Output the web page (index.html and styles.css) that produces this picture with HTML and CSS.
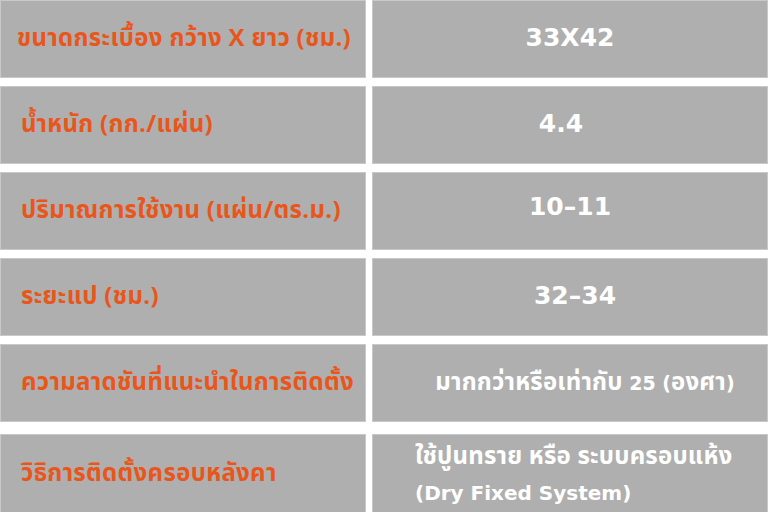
FILE: index.html
```html
<!DOCTYPE html>
<html lang="th">
<head>
<meta charset="utf-8">
<link rel="stylesheet" href="styles.css">
</head>
<body>
<div class="table">
  <div class="row">
    <div class="label first">ขนาดกระเบื้อง กว้าง X ยาว (ชม.)</div>
    <div class="value num">33X42</div>
  </div>
  <div class="row">
    <div class="label">น้ำหนัก (กก./แผ่น)</div>
    <div class="value num shift-l">4.4</div>
  </div>
  <div class="row">
    <div class="label">ปริมาณการใช้งาน (แผ่น/ตร.ม.)</div>
    <div class="value num up">10–11</div>
  </div>
  <div class="row">
    <div class="label">ระยะแป (ชม.)</div>
    <div class="value num shift-r2">32–34</div>
  </div>
  <div class="row">
    <div class="label">ความลาดชันที่แนะนำในการติดตั้ง</div>
    <div class="value text shift-r">มากกว่าหรือเท่ากับ<span class="latin">&nbsp;25 (</span>องศา<span class="latin">)</span></div>
  </div>
  <div class="row last">
    <div class="label">วิธิการติดตั้งครอบหลังคา</div>
    <div class="value text multi">
      <div class="lines">
        <div class="line">ใช้ปูนทราย หรือ ระบบครอบแห้ง</div>
        <div class="line latin-line">(Dry Fixed System)</div>
      </div>
    </div>
  </div>
</div>
</body>
</html>
```

FILE: styles.css
```css
html, body {
  margin: 0;
  padding: 0;
  background: #ffffff;
}

body {
  width: 768px;
  height: 512px;
  overflow: hidden;
  font-family: "Noto Sans Thai", "Noto Sans Thai UI", "Noto Sans", "DejaVu Sans", sans-serif;
}

.table {
  display: flex;
  flex-direction: column;
  gap: 8.5px;
}

.row {
  display: grid;
  grid-template-columns: 366px 1fr;
  column-gap: 6px;
  height: 77.5px;
}

.row.last {
  margin-top: 3.5px;
  height: 80px;
}

.label,
.value {
  background: #afafaf;
  box-shadow: inset 0 0 0 1px #c9c9c9;
  display: flex;
  align-items: center;
}

.label {
  padding-left: 21px;
  color: #e8561c;
  font-weight: 700;
  font-size: 24px;
  letter-spacing: 0.3px;
  white-space: nowrap;
}

.label.first {
  padding-left: 17px;
}

.value {
  justify-content: center;
  color: #ffffff;
  font-weight: 700;
  white-space: nowrap;
}

.value.num {
  font-family: "DejaVu Sans", sans-serif;
  font-size: 25px;
  padding-bottom: 2px;
}

.value.shift-l {
  padding-right: 18px;
}

.value.shift-r2 {
  padding-left: 10px;
}

.value.up {
  padding-bottom: 8px;
}

.value.text {
  font-size: 24px;
  letter-spacing: 0.2px;
}

.latin {
  font-family: "DejaVu Sans", sans-serif;
  font-size: 19px;
  letter-spacing: 0;
}

.value.shift-r {
  padding-left: 30px;
}

.value.multi {
  justify-content: flex-start;
  padding-left: 43px;
  align-items: stretch;
}

.lines {
  display: flex;
  flex-direction: column;
  justify-content: center;
  gap: 4px;
  padding-top: 2px;
}

.line {
  line-height: 32px;
}

.latin-line {
  font-family: "DejaVu Sans", sans-serif;
  font-size: 20px;
  letter-spacing: 0;
}
```
